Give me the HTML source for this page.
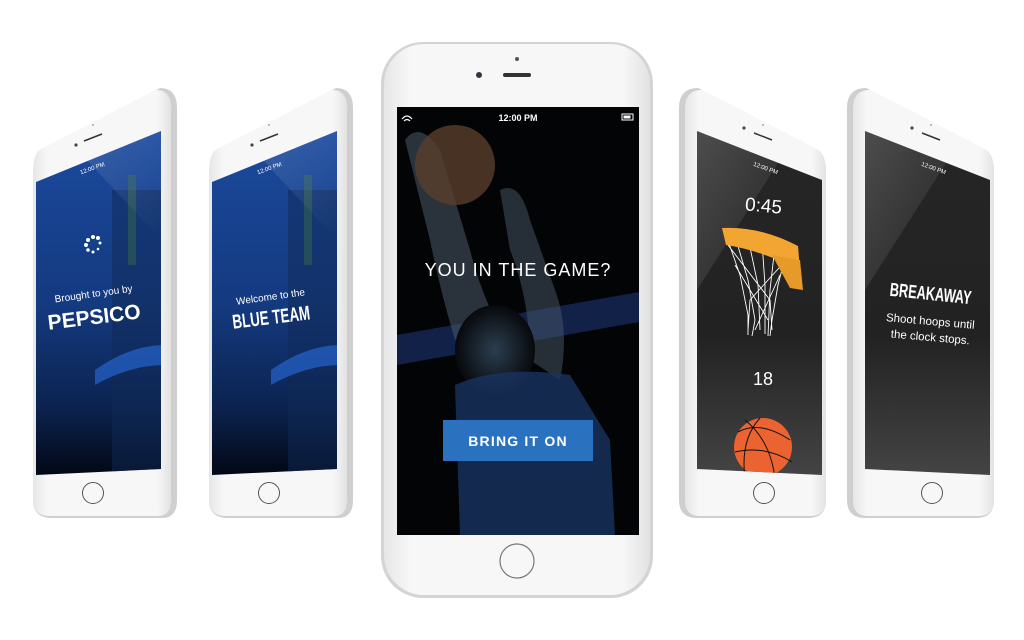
<!DOCTYPE html>
<html><head><meta charset="utf-8"><style>
html,body{margin:0;padding:0;background:#fff;}
svg{display:block}
text{font-family:"Liberation Sans",sans-serif;fill:#fff}
</style></head><body>
<svg width="1024" height="640" viewBox="0 0 1024 640" xmlns="http://www.w3.org/2000/svg">
<defs>
<linearGradient id="blue" x1="0" y1="0" x2="0" y2="1">
<stop offset="0" stop-color="#1b4a9e"/><stop offset="0.5" stop-color="#143a80"/><stop offset="0.8" stop-color="#0b2350"/><stop offset="1" stop-color="#020814"/>
</linearGradient>
<linearGradient id="dark" x1="0" y1="0" x2="0" y2="1">
<stop offset="0" stop-color="#262626"/><stop offset="0.6" stop-color="#222"/><stop offset="1" stop-color="#444"/>
</linearGradient>
<linearGradient id="glare" x1="0" y1="0" x2="1" y2="1">
<stop offset="0" stop-color="#fff" stop-opacity="0.3"/><stop offset="1" stop-color="#fff" stop-opacity="0"/>
</linearGradient>
<linearGradient id="body" x1="0" y1="0" x2="1" y2="0">
<stop offset="0" stop-color="#e6e6e6"/><stop offset="0.1" stop-color="#f7f7f7"/><stop offset="0.9" stop-color="#f7f7f7"/><stop offset="1" stop-color="#e2e2e2"/>
</linearGradient>
<radialGradient id="player" cx="0.5" cy="0.5" r="0.5">
<stop offset="0" stop-color="#2c3e50"/><stop offset="1" stop-color="#07090c"/>
</radialGradient>
<clipPath id="c1"><polygon points="36,182 161,131 161,469 36,475"/></clipPath>
<clipPath id="c2"><polygon points="212,182 337,131 337,469 212,475"/></clipPath>
<clipPath id="c4"><polygon points="697,131 822,180 822,475 697,469"/></clipPath>
<clipPath id="c5"><polygon points="865,131 990,180 990,475 865,469"/></clipPath>
<clipPath id="cc"><rect x="397" y="107" width="242" height="428"/></clipPath>
</defs>

<!-- Phone 1 -->
<path d="M40,150 Q33,154 33,175 L33,500 Q33,518 52,518 L162,518 Q177,518 177,500 L177,108 Q177,88 160,88 Z" fill="#cfcfcf"/>
<path d="M40,150 Q33,154 33,175 L33,500 Q33,516 50,516 L158,516 Q171,516 171,500 L171,108 Q171,90 156,90 Z" fill="url(#body)"/>
<polygon points="36,182 161,131 161,469 36,475" fill="url(#blue)"/>
<g clip-path="url(#c1)">
<rect x="112" y="190" width="50" height="290" fill="#0f2a55" opacity="0.5"/>
<rect x="128" y="175" width="8" height="90" fill="#3c6e45" opacity="0.45"/>
<path d="M95,370 Q130,345 165,345 L165,365 Q130,365 95,385 Z" fill="#2a6ee0" opacity="0.6"/>
<polygon points="60,131 161,131 161,240" fill="url(#glare)" opacity="0.5"/>
</g>
<g fill="#fff"><circle cx="93" cy="237" r="2"/><circle cx="98" cy="238" r="2"/><circle cx="100" cy="243" r="1.5"/><circle cx="98" cy="249" r="1.3"/><circle cx="93" cy="252" r="1.5"/><circle cx="88" cy="250" r="1.8"/><circle cx="86" cy="245" r="2"/><circle cx="88" cy="240" r="2"/></g>
<text x="94" y="297" font-size="10" text-anchor="middle" transform="rotate(-8 94 297)">Brought to you by</text>
<text x="95" y="324" font-size="21" font-weight="bold" text-anchor="middle" transform="rotate(-7 95 324)">PEPSICO</text>
<text x="93" y="170" font-size="6" text-anchor="middle" transform="rotate(-20 93 170)">12:00 PM</text>
<circle cx="93" cy="493" r="10.5" fill="none" stroke="#555" stroke-width="1"/>
<circle cx="76" cy="145" r="1.6" fill="#445"/><line x1="84" y1="141" x2="102" y2="134" stroke="#333" stroke-width="1.5"/><circle cx="93" cy="125" r="1" fill="#aaa"/>

<!-- Phone 2 -->
<path d="M216,150 Q209,154 209,175 L209,500 Q209,518 228,518 L338,518 Q353,518 353,500 L353,108 Q353,88 336,88 Z" fill="#cfcfcf"/>
<path d="M216,150 Q209,154 209,175 L209,500 Q209,516 226,516 L334,516 Q347,516 347,500 L347,108 Q347,90 332,90 Z" fill="url(#body)"/>
<polygon points="212,182 337,131 337,469 212,475" fill="url(#blue)"/>
<g clip-path="url(#c2)">
<rect x="288" y="190" width="50" height="290" fill="#0f2a55" opacity="0.5"/>
<rect x="304" y="175" width="8" height="90" fill="#3c6e45" opacity="0.45"/>
<path d="M271,370 Q306,345 341,345 L341,365 Q306,365 271,385 Z" fill="#2a6ee0" opacity="0.6"/>
<polygon points="236,131 337,131 337,240" fill="url(#glare)" opacity="0.5"/>
</g>
<text x="271" y="300" font-size="10" text-anchor="middle" transform="rotate(-8 271 300)">Welcome to the</text>
<text x="272" y="324" font-size="20" font-weight="bold" text-anchor="middle" transform="rotate(-7 272 324)" textLength="78" lengthAdjust="spacingAndGlyphs">BLUE TEAM</text>
<text x="270" y="170" font-size="6" text-anchor="middle" transform="rotate(-20 270 170)">12:00 PM</text>
<circle cx="269" cy="493" r="10.5" fill="none" stroke="#555" stroke-width="1"/>
<circle cx="252" cy="145" r="1.6" fill="#445"/><line x1="260" y1="141" x2="278" y2="134" stroke="#333" stroke-width="1.5"/><circle cx="269" cy="125" r="1" fill="#aaa"/>

<!-- Phone 4 -->
<path d="M818,150 Q826,154 826,175 L826,500 Q826,518 808,518 L697,518 Q679,518 679,500 L679,108 Q679,88 698,88 Z" fill="#cfcfcf"/>
<path d="M818,150 Q826,154 826,175 L826,500 Q826,516 810,516 L700,516 Q685,516 685,500 L685,108 Q685,90 702,90 Z" fill="url(#body)"/>
<polygon points="697,131 822,180 822,475 697,469" fill="url(#dark)"/>
<g clip-path="url(#c4)">
<polygon points="697,131 780,160 697,290" fill="url(#glare)" opacity="0.6"/>
<circle cx="763" cy="447" r="29" fill="#ea6330"/>
<path d="M738,432 Q760,420 790,440 M745,420 Q770,440 775,478 M760,418 Q740,440 745,478 M735,452 Q765,445 792,462" stroke="#111" stroke-width="1" fill="none"/>
</g>
<text x="763" y="212" font-size="19" text-anchor="middle" transform="rotate(5 763 212)">0:45</text>
<g stroke="#fff" stroke-width="0.9" fill="none">
<path d="M726,235 L740,275 L748,315 L748,335 M735,236 L748,280 L755,320 L752,336 M748,238 L758,285 L760,330 M762,242 L765,285 L765,334 M775,246 L770,290 L768,336 M787,250 L778,285 L772,320 L770,336 M728,245 L770,300 L772,330 M788,258 L750,300 L748,330 M735,265 L768,320 M780,275 L755,330"/>
</g>
<path d="M722,228 Q760,226 798,246 L800,270 Q760,250 726,245 Z" fill="#f2a531"/>
<path d="M772,255 L800,260 L803,290 L790,288 Z" fill="#e89a28"/>
<text x="763" y="385" font-size="18" text-anchor="middle">18</text>
<text x="765" y="170" font-size="6" text-anchor="middle" transform="rotate(20 765 170)">12:00 PM</text>
<circle cx="764" cy="493" r="10.5" fill="none" stroke="#555" stroke-width="1"/>
<circle cx="744" cy="128" r="1.6" fill="#445"/><line x1="754" y1="133" x2="772" y2="140" stroke="#333" stroke-width="1.5"/><circle cx="763" cy="125" r="1" fill="#aaa"/>

<!-- Phone 5 -->
<path d="M986,150 Q994,154 994,175 L994,500 Q994,518 976,518 L865,518 Q847,518 847,500 L847,108 Q847,88 866,88 Z" fill="#cfcfcf"/>
<path d="M986,150 Q994,154 994,175 L994,500 Q994,516 978,516 L868,516 Q853,516 853,500 L853,108 Q853,90 870,90 Z" fill="url(#body)"/>
<polygon points="865,131 990,180 990,475 865,469" fill="url(#dark)"/>
<g clip-path="url(#c5)"><polygon points="865,131 948,160 865,290" fill="url(#glare)" opacity="0.6"/></g>
<text x="930" y="300" font-size="19" font-weight="bold" text-anchor="middle" transform="rotate(6 930 300)" textLength="82" lengthAdjust="spacingAndGlyphs">BREAKAWAY</text>
<text x="930" y="325" font-size="11.5" text-anchor="middle" transform="rotate(5 930 325)">Shoot hoops until</text>
<text x="930" y="341" font-size="11.5" text-anchor="middle" transform="rotate(5 930 341)">the clock stops.</text>
<text x="933" y="170" font-size="6" text-anchor="middle" transform="rotate(20 933 170)">12:00 PM</text>
<circle cx="932" cy="493" r="10.5" fill="none" stroke="#555" stroke-width="1"/>
<circle cx="912" cy="128" r="1.6" fill="#445"/><line x1="922" y1="133" x2="940" y2="140" stroke="#333" stroke-width="1.5"/><circle cx="931" cy="125" r="1" fill="#aaa"/>

<!-- Center phone -->
<rect x="381" y="42" width="272" height="556" rx="42" fill="#d4d4d4"/>
<rect x="384" y="44" width="266" height="551" rx="40" fill="url(#body)"/>
<rect x="397" y="107" width="242" height="428" fill="#030405"/>
<g clip-path="url(#cc)">
<polygon points="397,335 639,292 639,322 397,365" fill="#1d3a80" opacity="0.55"/>
<path d="M405,140 Q420,120 440,150 L470,250 Q480,290 500,330 L455,340 Q440,290 430,240 Z" fill="#4a5a6a" opacity="0.55"/>
<path d="M500,190 Q520,180 530,220 L555,290 Q570,330 560,380 L530,360 Q530,300 510,250 Z" fill="#4a5a6a" opacity="0.5"/>
<ellipse cx="495" cy="350" rx="40" ry="45" fill="url(#player)"/>
<path d="M455,385 Q500,365 570,375 L610,440 L615,535 L460,535 Z" fill="#1a3566" opacity="0.75"/>
<circle cx="455" cy="165" r="40" fill="#5a3e2c" opacity="0.8"/>
</g>
<text x="518" y="121" font-size="9" font-weight="bold" text-anchor="middle">12:00 PM</text>
<path d="M402,119 Q407,113 412,119 M404,121 Q407,118 410,121" stroke="#fff" stroke-width="1.2" fill="none"/>
<rect x="622" y="114" width="11" height="6" fill="none" stroke="#fff" stroke-width="1"/><rect x="623.5" y="115.5" width="7" height="3" fill="#fff"/>
<text x="518" y="276" font-size="18" text-anchor="middle" letter-spacing="1">YOU IN THE GAME?</text>
<rect x="443" y="420" width="150" height="41" fill="#2a72c0"/>
<text x="518" y="446" font-size="14" font-weight="bold" text-anchor="middle" letter-spacing="1.2">BRING IT ON</text>
<circle cx="517" cy="59" r="2" fill="#555"/>
<circle cx="479" cy="75" r="3" fill="#334"/>
<rect x="503" y="73" width="28" height="4" rx="2" fill="#333"/>
<circle cx="517" cy="561" r="17" fill="none" stroke="#777" stroke-width="1.2"/>
</svg>
</body></html>
